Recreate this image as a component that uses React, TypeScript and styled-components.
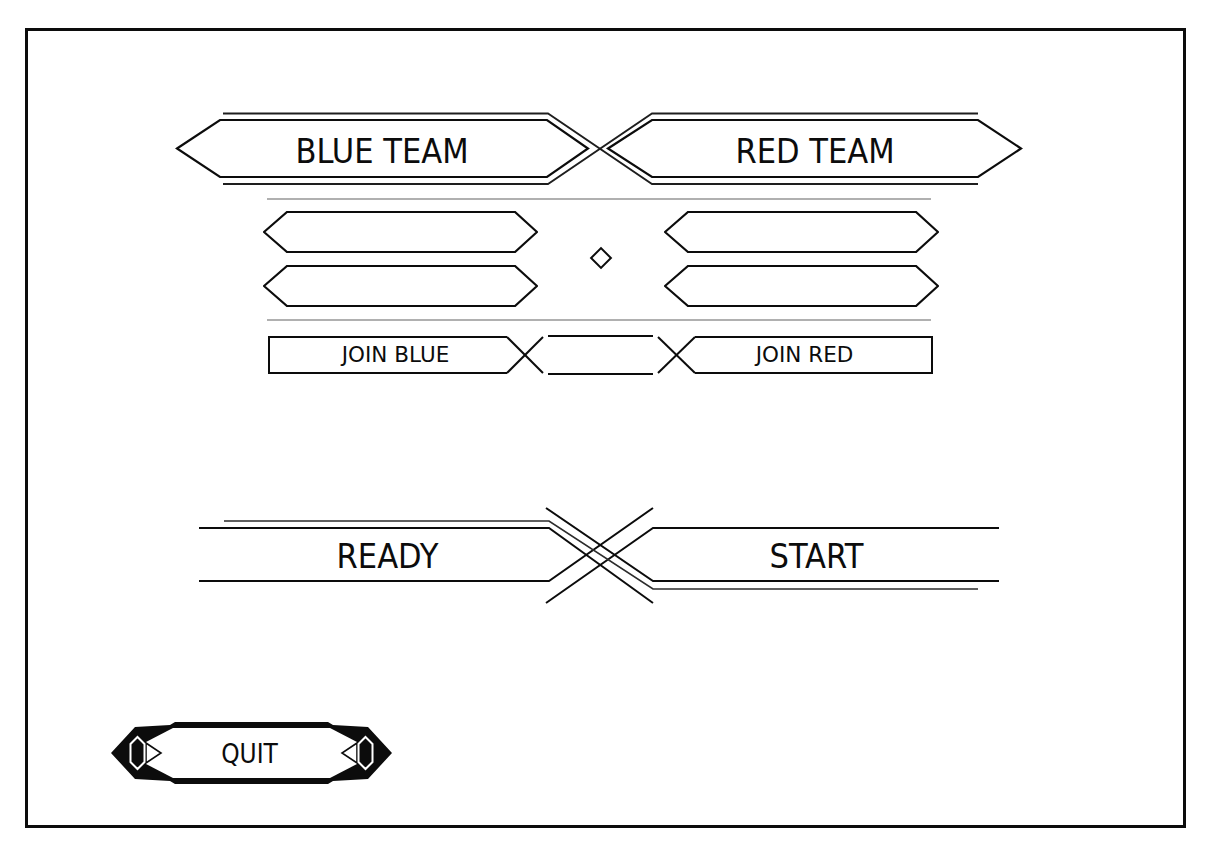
import React from "react";
import styled, { createGlobalStyle } from "styled-components";

const GlobalStyle = createGlobalStyle`
  html, body { margin: 0; padding: 0; background: #ffffff; }
  body { font-family: "DejaVu Sans", "Liberation Sans", sans-serif; color: #0a0a0a; }
  * { box-sizing: border-box; }
`;

const INK = "#0c0c0c";

const Page = styled.div`
  padding: 28px 0 0 25px;
  width: 1207px;
  height: 845px;
`;

const Frame = styled.div`
  width: 1161px;
  height: 800px;
  border: 3px solid ${INK};
  display: flex;
  flex-direction: column;
  align-items: flex-start;
`;

const Stage = styled.div`
  width: 846px;
  margin: 82px 0 0 148px;
  display: flex;
  flex-direction: column;
  align-items: center;
`;

const Backdrop = styled.svg`
  position: absolute;
  left: 0;
  top: 0;
  overflow: visible;
  pointer-events: none;
`;

const TeamHeader = styled.div`
  position: relative;
  width: 846px;
  height: 72px;
  display: flex;
  justify-content: space-between;
`;

const TeamLabel = styled.button<{ $w: number }>`
  position: relative;
  width: ${(p) => p.$w}px;
  height: 72px;
  padding: 4px 0 0 0;
  border: none;
  background: transparent;
  font-family: "DejaVu Sans Condensed", "DejaVu Sans", sans-serif;
  font-stretch: condensed;
  font-size: 34px;
  line-height: 1;
  color: ${INK};
  display: flex;
  align-items: center;
  justify-content: center;
  cursor: pointer;
`;

const Divider = styled.div<{ $mt: number }>`
  width: 664px;
  height: 2px;
  margin-top: ${(p) => p.$mt}px;
  background: #b0b0b0;
`;

const SlotGrid = styled.div`
  margin: 11px 0 0 4px;
  display: grid;
  grid-template-columns: 275px 126px 275px;
  grid-template-rows: 42px 42px;
  row-gap: 12px;
`;

const Slot = styled.div<{ $col: number; $row: number }>`
  grid-column: ${(p) => p.$col};
  grid-row: ${(p) => p.$row};
  width: 275px;
  height: 42px;
  display: flex;
`;

const Center = styled.div`
  grid-column: 2;
  grid-row: 1 / span 2;
  display: flex;
  align-items: center;
  justify-content: center;
  padding-bottom: 2px;
`;

const Diamond = styled.div`
  width: 16px;
  height: 16px;
  border: 2px solid ${INK};
  transform: rotate(45deg);
`;

const JoinRow = styled.div`
  position: relative;
  width: 665px;
  height: 40px;
  margin: 14px 0 0 2px;
  display: flex;
  justify-content: space-between;
`;

const JoinLabel = styled.button`
  position: relative;
  width: 256px;
  height: 40px;
  padding: 0;
  border: none;
  background: transparent;
  font-family: "DejaVu Sans", sans-serif;
  font-size: 21.5px;
  line-height: 1;
  color: ${INK};
  display: flex;
  align-items: center;
  justify-content: center;
  cursor: pointer;
`;

const ActionRow = styled.div`
  position: relative;
  width: 800px;
  height: 96px;
  margin-top: 132px;
  display: flex;
  justify-content: space-between;
`;

const ActionLabel = styled.button<{ $w: number }>`
  position: relative;
  width: ${(p) => p.$w}px;
  height: 96px;
  padding: 2px 0 0 0;
  border: none;
  background: transparent;
  font-family: "DejaVu Sans Condensed", "DejaVu Sans", sans-serif;
  font-stretch: condensed;
  font-size: 34px;
  line-height: 1;
  color: ${INK};
  display: flex;
  align-items: center;
  justify-content: center;
  cursor: pointer;
`;

const QuitButton = styled.button`
  position: relative;
  width: 283px;
  height: 65px;
  margin: 118px 0 0 82px;
  padding: 0;
  border: none;
  background: transparent;
  font-family: "DejaVu Sans Condensed", "DejaVu Sans", sans-serif;
  font-stretch: condensed;
  font-size: 26px;
  line-height: 1;
  color: ${INK};
  display: flex;
  align-items: center;
  justify-content: center;
  cursor: pointer;
`;

const QuitText = styled.span`
  position: relative;
  margin-right: 4px;
`;

const Label = styled.span`
  position: relative;
`;

const HeaderArt = () => (
  <Backdrop width={846} height={72} viewBox="0 0 846 72">
    <g fill="none" stroke={INK} strokeWidth={2.2} strokeLinejoin="miter">
      <polygon points="1,35.5 44,7 371,7 412,35.5 371,64 44,64" />
      <polygon points="432,35.5 476,7 802,7 845,35.5 802,64 476,64" />
    </g>
    <g fill="none" stroke="#1e1e1e" strokeWidth={1.8}>
      <polyline points="47,0.5 372,0.5 476,71 802,71" />
      <polyline points="802,0.5 476,0.5 372,71 47,71" />
    </g>
  </Backdrop>
);

const SlotArt = () => (
  <svg width={275} height={42} viewBox="0 0 275 42">
    <polygon
      points="1,21 24,1 252,1 274,21 252,41 24,41"
      fill="none"
      stroke={INK}
      strokeWidth={2.2}
    />
  </svg>
);

const JoinArt = () => (
  <Backdrop width={665} height={40} viewBox="0 0 665 40">
    <g fill="none" stroke={INK} strokeWidth={2}>
      <polyline points="239,2 1,2 1,38 239,38" />
      <line x1={239} y1={2} x2={275} y2={38} />
      <line x1={239} y1={38} x2={275} y2={2} />
      <line x1={280} y1={1} x2={385} y2={1} />
      <line x1={280} y1={39} x2={385} y2={39} />
      <line x1={390} y1={2} x2={427} y2={38} />
      <line x1={390} y1={38} x2={427} y2={2} />
      <polyline points="427,2 664,2 664,38 427,38" />
    </g>
  </Backdrop>
);

const ActionArt = () => (
  <Backdrop width={800} height={96} viewBox="0 0 800 96">
    <g fill="none" stroke={INK} strokeWidth={2}>
      <polyline points="0,21 350,21 454,96" />
      <polyline points="347,1 454,74 800,74" />
      <polyline points="0,74 350,74 454,1" />
      <polyline points="347,96 454,21 800,21" />
    </g>
    <g fill="none" stroke="#2c2c2c" strokeWidth={1.7}>
      <polyline points="25,14 350,14 454,82 779,82" />
    </g>
  </Backdrop>
);

const QuitArt = () => (
  <Backdrop width={283} height={65} viewBox="0 0 283 65">
    <polygon
      points="1,32 25,6 60,4 65,1 218,1 223,4 258,6 282,32 258,58 223,60 218,63 65,63 60,60 25,58"
      fill={INK}
    />
    <polygon
      points="63,7 220,7 247,21 247,43 220,57 63,57 36,43 36,21"
      fill="#ffffff"
    />
    <polygon points="36,22 51,32 36,42" fill="#ffffff" stroke={INK} strokeWidth={1.6} />
    <polygon points="247,22 232,32 247,42" fill="#ffffff" stroke={INK} strokeWidth={1.6} />
    <polygon
      points="27.5,16 34.5,23 34.5,41 27.5,48 20.5,41 20.5,23"
      fill={INK}
      stroke="#ffffff"
      strokeWidth={2}
    />
    <polygon
      points="255.5,16 262.5,23 262.5,41 255.5,48 248.5,41 248.5,23"
      fill={INK}
      stroke="#ffffff"
      strokeWidth={2}
    />
  </Backdrop>
);

export default function App() {
  return (
    <>
      <GlobalStyle />
      <Page>
        <Frame>
          <Stage>
            <TeamHeader>
              <HeaderArt />
              <TeamLabel $w={412}>
                <Label>BLUE TEAM</Label>
              </TeamLabel>
              <TeamLabel $w={414}>
                <Label>RED TEAM</Label>
              </TeamLabel>
            </TeamHeader>

            <Divider $mt={13} />

            <SlotGrid>
              <Slot $col={1} $row={1}>
                <SlotArt />
              </Slot>
              <Slot $col={1} $row={2}>
                <SlotArt />
              </Slot>
              <Center>
                <Diamond />
              </Center>
              <Slot $col={3} $row={1}>
                <SlotArt />
              </Slot>
              <Slot $col={3} $row={2}>
                <SlotArt />
              </Slot>
            </SlotGrid>

            <Divider $mt={12} />

            <JoinRow>
              <JoinArt />
              <JoinLabel>
                <Label>JOIN BLUE</Label>
              </JoinLabel>
              <JoinLabel>
                <Label>JOIN RED</Label>
              </JoinLabel>
            </JoinRow>

            <ActionRow>
              <ActionArt />
              <ActionLabel $w={377}>
                <Label>READY</Label>
              </ActionLabel>
              <ActionLabel $w={365}>
                <Label>START</Label>
              </ActionLabel>
            </ActionRow>
          </Stage>

          <QuitButton>
            <QuitArt />
            <QuitText>QUIT</QuitText>
          </QuitButton>
        </Frame>
      </Page>
    </>
  );
}
